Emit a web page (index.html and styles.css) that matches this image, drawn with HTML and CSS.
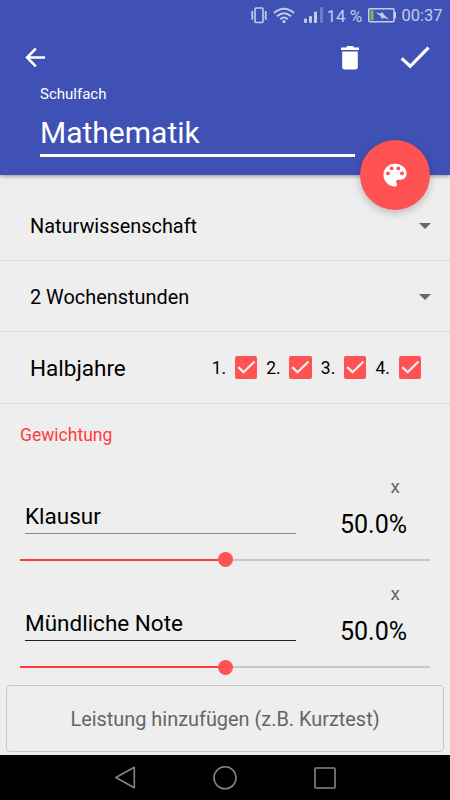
FILE: index.html
```html
<!DOCTYPE html>
<html lang="de">
<head>
    <meta charset="UTF-8">
    <meta name="viewport" content="width=device-width, initial-scale=1.0">
    <title>Schulfach</title>
    <link rel="stylesheet" href="styles.css">
</head>
<body>
    <header class="header">
        <div class="statusbar">
            <svg class="vibrate" width="18" height="17" viewBox="0 0 18 17" fill="none" stroke="currentColor">
                <rect x="5" y="1" width="8" height="14.5" rx="1" stroke-width="1.6"/>
                <path d="M2.8 4l-1 1.4 1 1.5-1 1.5 1 1.5-1 1.4 1 1.5M15.2 4l1 1.4-1 1.5 1 1.5-1 1.5 1 1.4-1 1.5" stroke-width="1.5"/>
            </svg>
            <svg class="wifi" width="22" height="17" viewBox="0 0 22 17" fill="none" stroke="currentColor" stroke-width="1.9">
                <path d="M1 6Q11-2.6 21 6M4 9.3Q11 3.2 18 9.3M7.2 12.2Q11 9 14.8 12.2"/>
                <circle cx="11" cy="14.5" r="1.6" fill="currentColor" stroke="none"/>
            </svg>
            <svg class="signal" width="19" height="16" viewBox="0 0 19 16" fill="currentColor">
                <rect x="0" y="11.5" width="3" height="4.5" rx="1"/>
                <rect x="5" y="9" width="3" height="7" rx="1"/>
                <rect x="10" y="4.5" width="3" height="11.5" rx="1"/>
                <rect x="16" y="0" width="3" height="16" rx="1" opacity=".35"/>
            </svg>
            <span class="percent">14 %</span>
            <svg class="battery" width="28" height="15" viewBox="0 0 28 15">
                <rect x=".75" y=".75" width="25.2" height="13" rx="1" fill="none" stroke="currentColor" stroke-width="1.5"/>
                <rect x="26" y="4" width="2" height="6.5" fill="currentColor"/>
                <rect x="2.4" y="2.3" width="3.2" height="10" fill="#76b852"/>
                <path d="M7.5 4.2L13 5.6l1.2-1.8 1.8 3 5.2 4.8-5.8-1.8-1.4 1.4-1.5-3.1z" fill="currentColor"/>
            </svg>
            <span class="clock">00:37</span>
        </div>
        <div class="toolbar">
            <svg class="back" width="20" height="20" viewBox="0 0 20 20" fill="none" stroke="#fff" stroke-width="2.5">
                <path d="M20 9.500H2M10.800.6L2 9.500l8.800 8.900"/>
            </svg>
            <svg class="trash" width="18" height="24" viewBox="0 0 18 24" fill="#fff">
                <path d="M0 1.400h5L6 0h6l1 1.400h5V4H0zM1.200 5.500h15.600v15.500q0 2.500-2.500 2.500H3.700q-2.500 0-2.500-2.500z"/>
            </svg>
            <svg class="done" width="30" height="23" viewBox="0 0 30 23" fill="none" stroke="#fff" stroke-width="3.300">
                <path d="M1.700 12.400L10.200 20.300 28.500 1.700"/>
            </svg>
        </div>
        <div class="subject">
            <label class="subject-label">Schulfach</label>
            <div class="subject-name">Mathematik</div>
        </div>
        <div class="fab">
            <svg width="24" height="24" viewBox="0 0 24 24" fill="#fff">
                <path d="M12 .8C5.600.8.400 5.700.400 12S5.600 23.400 12 23.400c1.200 0 2-.9 2-2 0-.5-.2-1-.5-1.300-.3-.4-.5-.8-.5-1.300 0-1.100.9-2 2-2h2.300c3.500 0 6.300-2.700 6.300-6.200C23.600 5.200 18.400.8 12 .8z"/>
                <g fill="#ff5252">
                    <circle cx="5" cy="10.400" r="1.900"/>
                    <circle cx="8.600" cy="5.400" r="1.900"/>
                    <circle cx="15.300" cy="5.400" r="1.900"/>
                    <circle cx="19" cy="10.400" r="1.900"/>
                </g>
            </svg>
        </div>
    </header>

    <main class="content">
        <div class="row">
            <span class="row-text">Naturwissenschaft</span>
            <span class="arrow"></span>
        </div>
        <div class="row">
            <span class="row-text">2 Wochenstunden</span>
            <span class="arrow"></span>
        </div>
        <div class="row terms">
            <span class="row-title">Halbjahre</span>
            <div class="checks">
                <div class="check">1.<svg class="box" viewBox="0 0 22 23"><path d="M3 11.200l5.300 5L19.300 5.500"/></svg></div>
                <div class="check">2.<svg class="box" viewBox="0 0 22 23"><path d="M3 11.200l5.300 5L19.300 5.500"/></svg></div>
                <div class="check">3.<svg class="box" viewBox="0 0 22 23"><path d="M3 11.200l5.300 5L19.300 5.500"/></svg></div>
                <div class="check">4.<svg class="box" viewBox="0 0 22 23"><path d="M3 11.200l5.300 5L19.300 5.500"/></svg></div>
            </div>
        </div>

        <h2 class="section-title">Gewichtung</h2>

        <div class="weight">
            <div class="weight-top">
                <div class="weight-name">Klausur</div>
                <div class="weight-side">
                    <span class="remove">x</span>
                    <span class="value">50.0%</span>
                </div>
            </div>
            <div class="slider"><div class="fill" style="width: 50%"></div><div class="thumb"></div><div class="rest"></div></div>
        </div>
        <div class="weight">
            <div class="weight-top">
                <div class="weight-name dark">Mündliche Note</div>
                <div class="weight-side">
                    <span class="remove">x</span>
                    <span class="value">50.0%</span>
                </div>
            </div>
            <div class="slider"><div class="fill" style="width: 50%"></div><div class="thumb"></div><div class="rest"></div></div>
        </div>

        <button class="add">Leistung hinzufügen (z.B. Kurztest)</button>
    </main>

    <nav class="navbar">
        <svg width="22" height="24" viewBox="0 0 22 24"><path d="M20.300 1.300v20.400L1.800 11.500z"/></svg>
        <svg width="24" height="24" viewBox="0 0 24 24"><circle cx="12" cy="11.800" r="11"/></svg>
        <svg width="22" height="22" viewBox="0 0 22 22"><rect x="1" y="1" width="20" height="20" rx=".8"/></svg>
    </nav>
</body>
</html>
```

FILE: styles.css
```css
* {
    box-sizing: border-box;
}
body {
    font-family: Roboto, sans-serif;
    background-color: #eee;
    color: #000;
    margin: 0;
    height: 800px;
    display: flex;
    flex-direction: column;
    overflow: hidden;
}
svg {
    display: block;
    flex: none;
}

/* header */
.header {
    position: relative;
    height: 175px;
    flex: none;
    background-color: #3f51b5;
    color: #fff;
    box-shadow: 0 1px 4px rgba(0, 0, 0, 0.4);
}
.statusbar {
    display: flex;
    align-items: center;
    height: 30px;
    padding-left: 249.5px;
    color: #c5cbe9;
    font-size: 16.5px;
    line-height: 30px;
    white-space: nowrap;
}
.wifi {
    margin-left: 5.5px;
}
.signal {
    margin-left: 9px;
}
.percent {
    width: 36px;
    margin: 2px 0 0 3.5px;
    font-size: 17px;
}
.battery {
    margin-left: 5.5px;
}
.clock {
    margin: 2px 0 0 5.5px;
}
.toolbar {
    display: flex;
    align-items: center;
    height: 55px;
    padding: 0 20px 0 25px;
}
.trash {
    margin-left: auto;
}
.done {
    margin-left: 41px;
}
.subject {
    width: 315px;
    margin-left: 40px;
}
.subject-label {
    display: block;
    font-size: 15px;
    line-height: 18px;
}
.subject-name {
    height: 54px;
    padding-top: 12px;
    border-bottom: 3px solid #fff;
    font-size: 30px;
    line-height: 36px;
}
.fab {
    position: absolute;
    right: 20px;
    bottom: -35px;
    width: 70px;
    height: 70px;
    border-radius: 50%;
    background-color: #ff5252;
    box-shadow: 0 3px 8px rgba(0, 0, 0, 0.22);
    display: flex;
    align-items: center;
    justify-content: center;
}

/* content */
.content {
    flex: 1;
    min-height: 0;
    padding-top: 15px;
}
.row {
    display: flex;
    align-items: center;
    justify-content: space-between;
    height: 71px;
    padding: 2px 19px 0 30px;
    border-bottom: 1px solid #dadada;
}
.row-text {
    font-size: 19.9px;
}
.arrow {
    border: 6px solid transparent;
    border-top-color: #666;
    border-bottom: none;
}
.terms {
    height: 72px;
    padding-top: 0;
    padding-right: 29px;
}
.row-title {
    font-size: 22.5px;
}
.checks {
    display: flex;
    gap: 9px;
    font-size: 17.5px;
}
.check {
    display: flex;
    align-items: center;
    justify-content: space-between;
    width: 45.6px;
}
.box {
    width: 22.5px;
    height: 23px;
    border-radius: 2px;
    background-color: #ff5252;
    fill: none;
    stroke: #eee;
    stroke-width: 2.3;
}
.section-title {
    margin: 20px 0 0 20px;
    font-size: 17.5px;
    font-weight: normal;
    line-height: 22px;
    color: #ff3b3b;
}

/* weights */
.weight {
    height: 107.5px;
}
.section-title + .weight {
    margin-top: 9.4px;
}
.weight-top {
    display: flex;
    align-items: flex-end;
    height: 88px;
    padding-left: 25px;
}
.weight-name {
    width: 271px;
    height: 36px;
    margin-bottom: 9.5px;
    border-bottom: 1px solid #888;
    font-size: 22.5px;
    line-height: 36px;
}
.weight-name.dark {
    margin-bottom: 10.2px;
    border-color: #222;
}
.weight-side {
    display: flex;
    flex-direction: column;
    width: 111px;
    margin-bottom: 1.5px;
    text-align: right;
}
.remove {
    padding-right: 7px;
    font-size: 19px;
    line-height: 24px;
    color: #666;
}
.value {
    margin-top: 9px;
    font-size: 25px;
    line-height: 34px;
}
.slider {
    display: flex;
    align-items: center;
    height: 15px;
    margin: 9px 20px 0;
}
.fill {
    height: 2px;
    margin-right: -7.5px;
    background-color: #ff3b3b;
}
.thumb {
    width: 15px;
    height: 15px;
    border-radius: 50%;
    background-color: #ff5252;
}
.rest {
    flex: 1;
    height: 2px;
    background-color: #c8c8c8;
}
.add {
    display: block;
    width: 438px;
    height: 67px;
    margin: 14.5px 6px 0;
    padding-top: 3px;
    border: 1px solid #c6c6c6;
    border-radius: 4px;
    background: none;
    font-family: inherit;
    font-size: 19.9px;
    color: #666;
}

/* android navigation */
.navbar {
    display: flex;
    align-items: center;
    justify-content: center;
    gap: 77px;
    height: 45px;
    flex: none;
    background-color: #000;
}
.navbar svg {
    fill: none;
    stroke: #858585;
    stroke-width: 1.6;
    stroke-linejoin: round;
}
```
